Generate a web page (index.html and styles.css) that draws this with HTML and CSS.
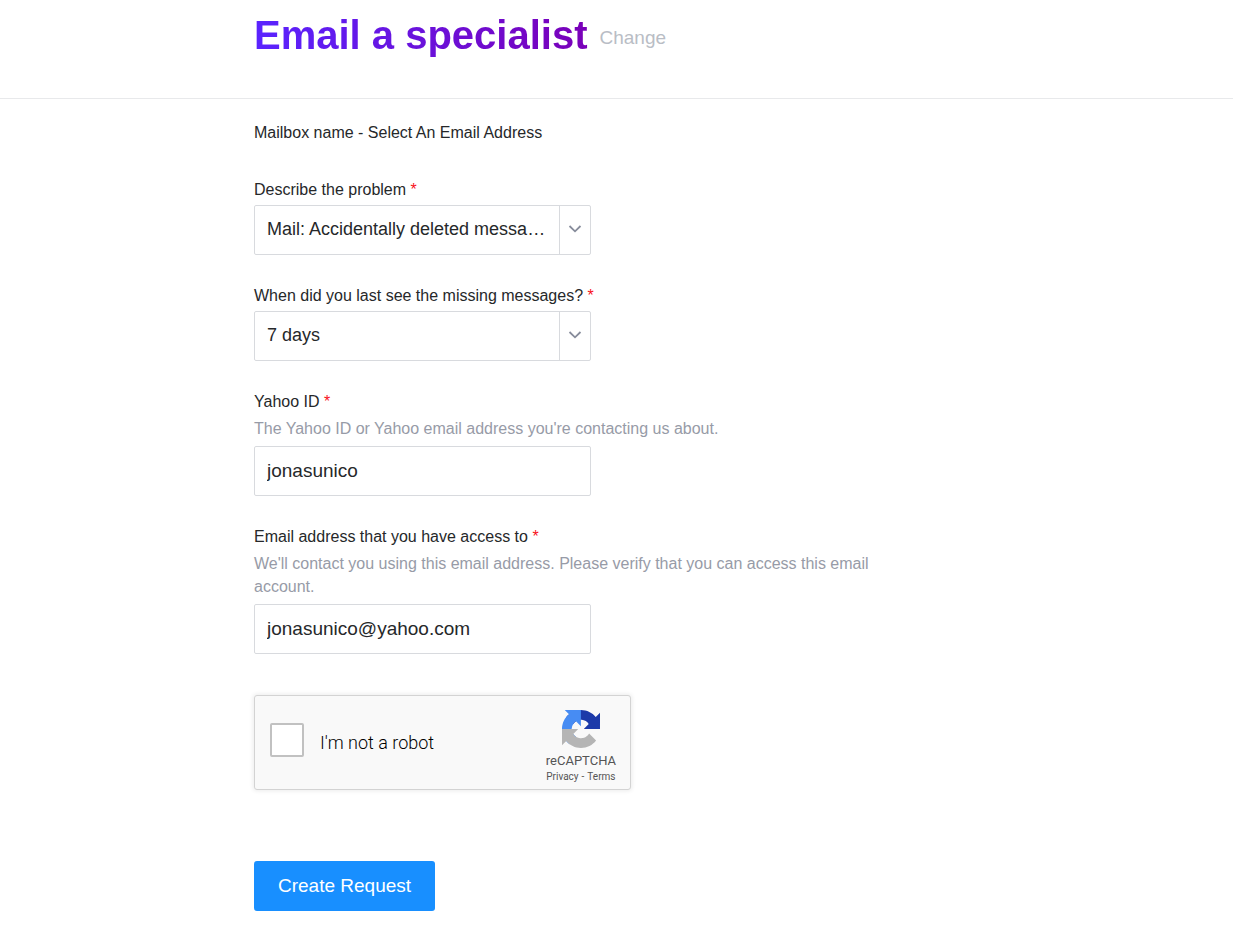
FILE: index.html
```html
<!DOCTYPE html>
<html lang="en">
<head>
    <meta charset="UTF-8">
    <meta name="viewport" content="width=device-width, initial-scale=1.0">
    <title>Email a specialist</title>
    <link rel="stylesheet" href="styles.css">
</head>
<body>
    <!-- Header -->
    <header class="page-header">
        <div class="container header-row">
            <h1>Email a specialist</h1>
            <a class="change-link" href="#">Change</a>
        </div>
    </header>

    <!-- Request Form -->
    <main class="container">
        <form class="request-form">
            <p class="mailbox">Mailbox name - Select An Email Address</p>

            <div class="field">
                <label for="problem">Describe the problem <span class="required">*</span></label>
                <div class="select-box">
                    <select id="problem">
                        <option>Mail: Accidentally deleted messages</option>
                    </select>
                    <span class="arrow">
                        <svg width="14" height="8" viewBox="0 0 14 8"><path d="M1.5 1L7 6.3 12.5 1" fill="none" stroke="#878c9b" stroke-width="1.8"/></svg>
                    </span>
                </div>
            </div>

            <div class="field">
                <label for="lastSeen">When did you last see the missing messages? <span class="required">*</span></label>
                <div class="select-box">
                    <select id="lastSeen">
                        <option>7 days</option>
                    </select>
                    <span class="arrow">
                        <svg width="14" height="8" viewBox="0 0 14 8"><path d="M1.5 1L7 6.3 12.5 1" fill="none" stroke="#878c9b" stroke-width="1.8"/></svg>
                    </span>
                </div>
            </div>

            <div class="field">
                <label for="yahooId">Yahoo ID <span class="required">*</span></label>
                <p class="hint">The Yahoo ID or Yahoo email address you're contacting us about.</p>
                <input class="text-input" type="text" id="yahooId" value="jonasunico">
            </div>

            <div class="field">
                <label for="email">Email address that you have access to <span class="required">*</span></label>
                <p class="hint">We'll contact you using this email address. Please verify that you can access this email account.</p>
                <input class="text-input" type="email" id="email" value="jonasunico@yahoo.com">
            </div>

            <!-- Captcha -->
            <div class="captcha">
                <input type="checkbox" id="robot">
                <label for="robot">I'm not a robot</label>
                <div class="captcha-brand">
                    <svg width="38" height="38" viewBox="0 0 64 64">
                        <path fill="#1c3aa9" d="M64 31.955l-.033-1.37V4.687l-7.16 7.16C50.948 4.674 42.033.093 32.05.093c-10.4 0-19.622 4.96-25.458 12.64l11.736 11.86a15.55 15.55 0 0 1 4.754-5.334c2.05-1.6 4.952-2.906 8.968-2.906.485 0 .86.057 1.135.163 4.976.393 9.288 3.14 11.828 7.124l-8.307 8.307L64 31.953"/>
                        <path fill="#478cf3" d="M31.862.094l-1.37.033H4.594l7.16 7.16C4.58 13.147 0 22.06 0 32.046c0 10.4 4.96 19.622 12.64 25.458L24.5 45.768a15.55 15.55 0 0 1-5.334-4.754c-1.6-2.05-2.906-4.952-2.906-8.968 0-.485.057-.86.163-1.135.393-4.976 3.14-9.288 7.124-11.828l8.307 8.307L31.86.095"/>
                        <path fill="#b5b5b5" d="M.001 32.045l.033 1.37v25.898l7.16-7.16c5.86 7.173 14.774 11.754 24.76 11.754 10.4 0 19.622-4.96 25.458-12.64l-11.736-11.86a15.55 15.55 0 0 1-4.754 5.334c-2.05 1.6-4.952 2.906-8.968 2.906-.485 0-.86-.057-1.135-.163-4.976-.393-9.288-3.14-11.828-7.124l8.307-8.307c-10.522.04-22.4.066-27.295-.005"/>
                    </svg>
                    <span class="brand-name">reCAPTCHA</span>
                    <div class="brand-links">
                        <a href="#">Privacy</a>
                        <span>-</span>
                        <a href="#">Terms</a>
                    </div>
                </div>
            </div>

            <button class="submit" type="submit">Create Request</button>
        </form>
    </main>
</body>
</html>
```

FILE: styles.css
```css
* {
    box-sizing: border-box;
}

body {
    margin: 0;
    background: #fff;
    color: #26282a;
    font-family: "Liberation Sans", Arial, sans-serif;
    font-size: 16px;
    line-height: 24px;
}

h1,
p {
    margin: 0;
}

.container {
    max-width: 725px;
    margin: 0 auto;
}

/* Header */
.page-header {
    padding: 11px 0 39px;
    border-bottom: 1px solid #e8e9eb;
}

.header-row {
    display: flex;
    align-items: center;
    gap: 12px;
}

h1 {
    font-size: 40px;
    line-height: 48px;
    background: linear-gradient(90deg, #5a23ff, #7a00b8);
    -webkit-background-clip: text;
    background-clip: text;
    color: transparent;
}

.change-link {
    padding-top: 6px;
    color: #b9bdc5;
    font-size: 19px;
    text-decoration: none;
}

/* Form */
.request-form {
    padding: 22px 0 38px;
}

.mailbox {
    margin-bottom: 33px;
}

.field {
    margin-bottom: 29px;
}

.field label {
    display: block;
    margin-bottom: 3px;
}

.required {
    color: #f81020;
}

.hint {
    max-width: 660px;
    margin-bottom: 6px;
    color: #979ba7;
    line-height: 23px;
}

.text-input,
.select-box {
    width: 100%;
    max-width: 337px;
    height: 50px;
}

.text-input,
.select-box select {
    display: block;
    padding: 0 12px;
    background: #fff;
    border: 1px solid #d8dade;
    border-radius: 2px;
    color: #26282a;
    font-family: inherit;
    font-size: 19px;
}

.select-box {
    position: relative;
}

.select-box select {
    width: 100%;
    height: 100%;
    padding-right: 42px;
    padding-bottom: 2px;
    font-size: 18px;
    text-overflow: ellipsis;
    appearance: none;
}

.arrow {
    position: absolute;
    top: 1px;
    right: 1px;
    bottom: 1px;
    width: 31px;
    display: flex;
    align-items: center;
    justify-content: center;
    padding-bottom: 2px;
    border-left: 1px solid #d8dade;
    pointer-events: none;
}

/* Captcha */
.captcha {
    display: flex;
    align-items: center;
    max-width: 377px;
    height: 95px;
    margin-top: 41px;
    padding: 0 14px 0 15px;
    background: #f9f9f9;
    border: 1px solid #d3d3d3;
    border-radius: 3px;
    box-shadow: 0 0 4px 1px rgba(0, 0, 0, 0.08);
    color: #000;
    font-family: Roboto, sans-serif;
}

.captcha input {
    width: 34px;
    height: 34px;
    margin: 0 16px 6px 0;
    background: #fff;
    border: 2px solid #c1c1c1;
    border-radius: 2px;
    appearance: none;
}

.captcha label {
    font-size: 18px;
    font-weight: 300;
}

.captcha-brand {
    display: flex;
    flex-direction: column;
    align-items: center;
    margin-left: auto;
    padding-top: 8px;
    color: #555;
}

.brand-name {
    margin-top: 4px;
    font-size: 13px;
    line-height: 18px;
}

.brand-links {
    display: flex;
    gap: 3px;
    font-size: 10px;
    line-height: 14px;
}

.brand-links a {
    color: inherit;
    text-decoration: none;
}

/* Submit */
.submit {
    min-width: 181px;
    height: 50px;
    margin-top: 71px;
    padding: 0 24px;
    background: #188fff;
    border: none;
    border-radius: 3px;
    color: #fff;
    font-family: inherit;
    font-size: 19px;
    cursor: pointer;
}
```
